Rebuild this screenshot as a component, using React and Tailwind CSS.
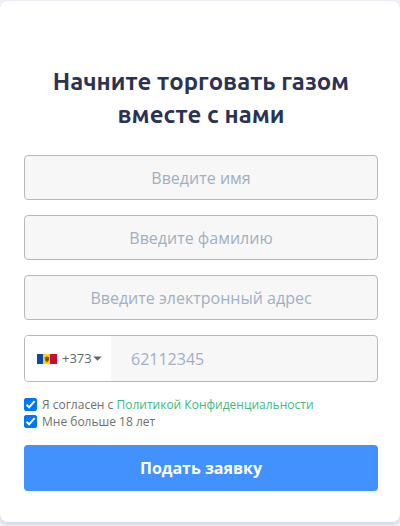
import { useState } from "react";

const fieldClass =
  "h-[45px] w-full rounded border border-[#b8b8b8] bg-[#f7f7f7] px-4 text-center text-base text-[#495057] outline-none placeholder:text-[#9fb0c3] focus:border-[#4291ff]";

function Field({ label, type, name }) {
  return <input className={fieldClass} type={type} name={name} placeholder={label} aria-label={label} />;
}

function MoldovaFlag() {
  return (
    <svg className="h-[10px] w-5 shrink-0" viewBox="0 0 20 10" shapeRendering="crispEdges" aria-hidden="true">
      <rect width="7" height="10" fill="#0b47af" />
      <rect x="6" width="8" height="10" fill="#ffd200" />
      <rect x="13" width="7" height="10" fill="#cb0d31" />
      <g shapeRendering="auto">
        <path d="M10 2 L11 3 L12.3 3 L12 6.5 L10 8.2 L8 6.5 L7.7 3 L9 3 Z" fill="#8b5a2b" />
        <path d="M9 4 H11 V5.8 L10 6.6 L9 5.8 Z" fill="#5c5046" />
      </g>
    </svg>
  );
}

function Tick({ id, children }) {
  const [checked, setChecked] = useState(true);
  return (
    <div className="flex h-[17px] items-center gap-[5px]">
      <span className="relative flex size-[13px] shrink-0">
        <input
          id={id}
          type="checkbox"
          checked={checked}
          onChange={(e) => setChecked(e.target.checked)}
          className="peer size-[13px] appearance-none rounded-[2px] border border-[#767676] bg-white checked:border-[#0075ff] checked:bg-[#0075ff]"
        />
        <svg
          className="pointer-events-none absolute inset-0 hidden size-[13px] peer-checked:block"
          viewBox="0 0 13 13"
          fill="none"
          stroke="#fff"
          strokeWidth="2"
          aria-hidden="true"
        >
          <path d="M2.5 6.7 L5.1 9.3 L10.6 3.2" />
        </svg>
      </span>
      <label htmlFor={id} className="text-xs whitespace-nowrap text-[#6f6f6f]">
        {children}
      </label>
    </div>
  );
}

export default function App() {
  return (
    <div className="min-h-screen bg-[#f1f3f9] pt-px font-['Open_Sans','Noto_Sans',sans-serif]">
      <main className="rounded-lg bg-white pt-16 pr-[22px] pb-[31px] pl-6 shadow-[0_2px_5px_rgba(60,72,100,0.2)]">
        <h1 className="text-center font-['Ubuntu','Noto_Sans',sans-serif] text-2xl leading-[33px] font-bold text-[#2b3252]">
          Начните торговать газом вместе с нами
        </h1>
        <form className="mt-6" onSubmit={(e) => e.preventDefault()}>
          <div className="flex flex-col gap-[15px]">
            <Field label="Введите имя" type="text" name="firstName" />
            <Field label="Введите фамилию" type="text" name="lastName" />
            <Field label="Введите электронный адрес" type="email" name="email" />
            <div className="flex h-[47px] overflow-hidden rounded border border-[#b8b8b8] bg-[#f7f7f7]">
              <button
                type="button"
                aria-label="Код страны +373"
                className="flex w-[86px] shrink-0 items-center bg-white pl-3 text-[13px] text-[#666]"
              >
                <MoldovaFlag />
                <span className="ml-[5px]">+373</span>
                <svg className="ml-px h-[5px] w-[9px] shrink-0" viewBox="0 0 9 5" aria-hidden="true">
                  <path d="M0.3 0.4 H8.7 L4.5 4.8 Z" fill="#666" />
                </svg>
              </button>
              <input
                className="min-w-0 flex-1 bg-transparent px-5 text-base text-[#495057] outline-none placeholder:text-[#9fb0c3]"
                type="tel"
                name="phone"
                placeholder="62112345"
                aria-label="Телефон"
              />
            </div>
          </div>
          <div className="mt-[14px] mb-[15px]">
            <Tick id="policy">
              Я согласен с{" "}
              <a href="#policy" className="text-[#41b883]">
                Политикой Конфиденциальности
              </a>
            </Tick>
            <Tick id="adult">Мне больше 18 лет</Tick>
          </div>
          <button type="submit" className="h-[46px] w-full rounded bg-[#4291ff] text-base font-bold text-white">
            Подать заявку
          </button>
        </form>
      </main>
    </div>
  );
}
